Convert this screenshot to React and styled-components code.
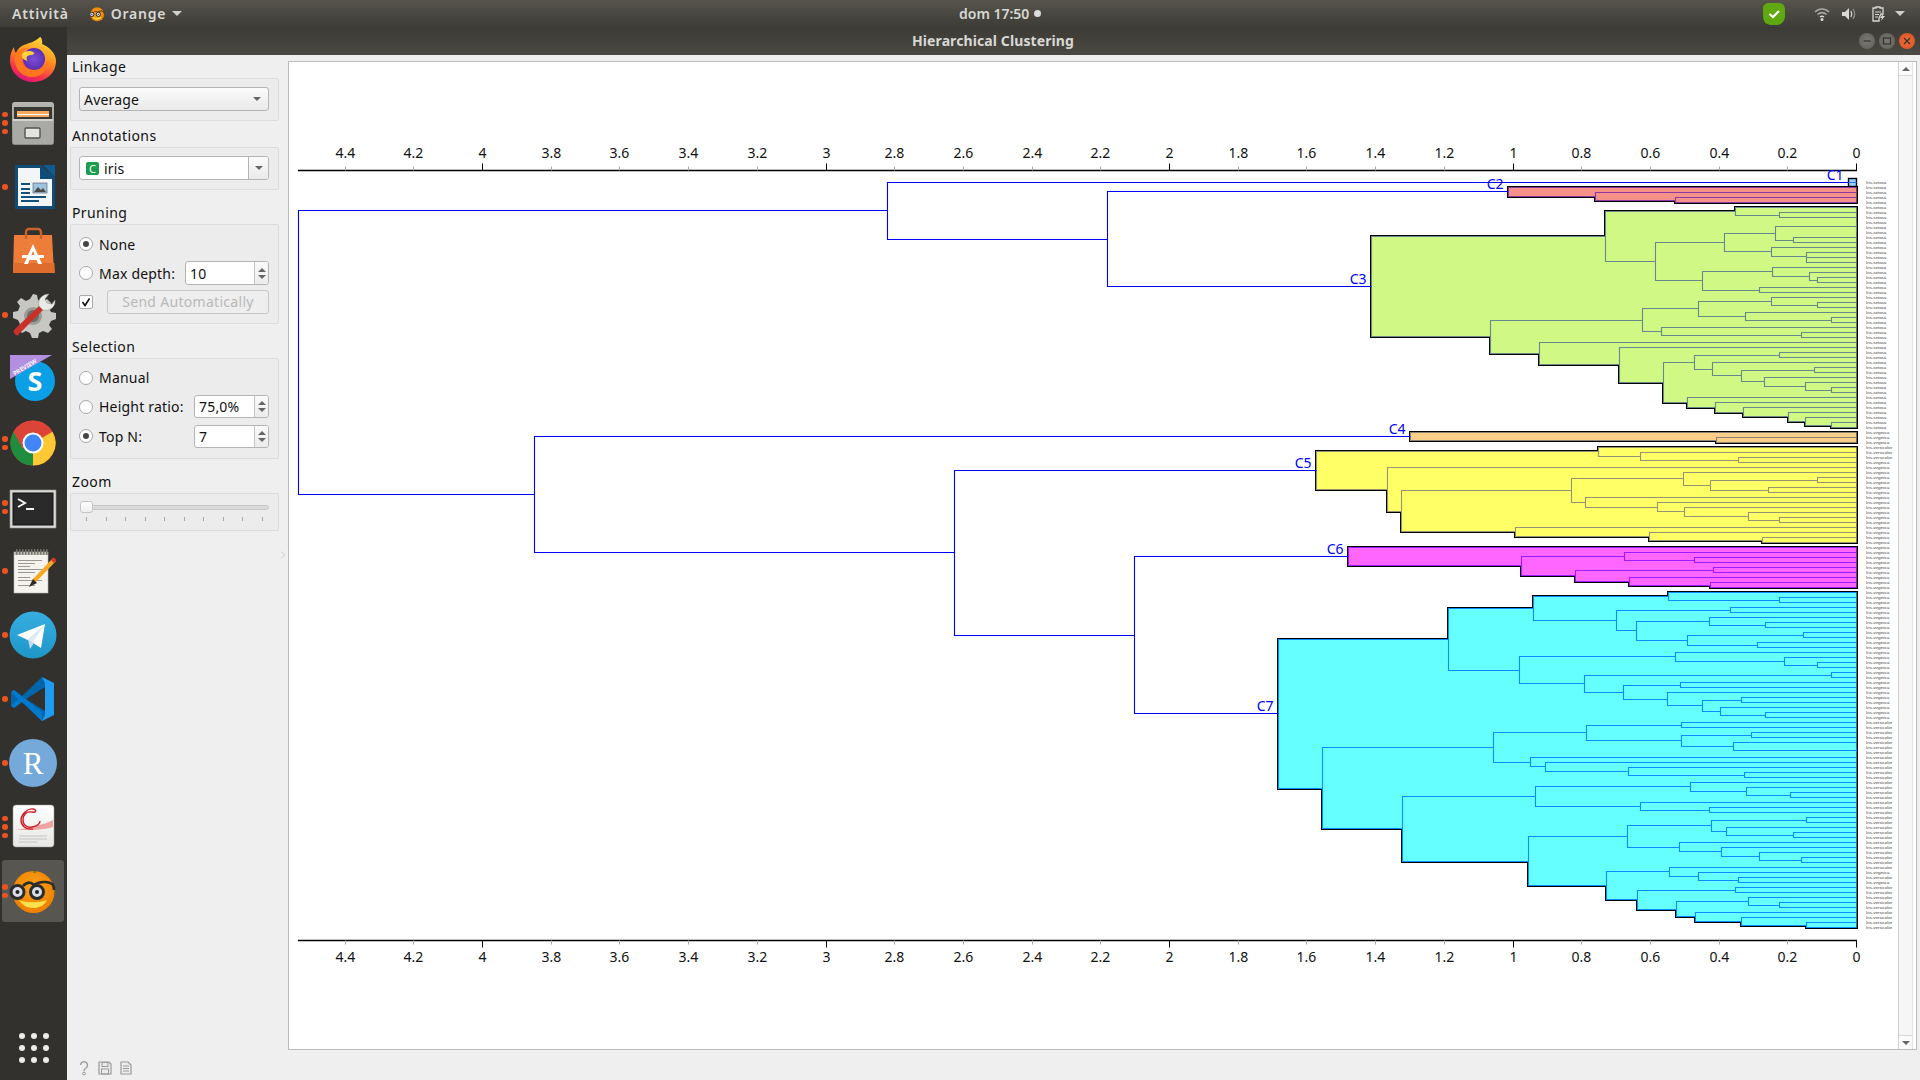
import React from "react";
import styled, { createGlobalStyle } from "styled-components";

const Global = createGlobalStyle`
  html, body { margin: 0; padding: 0; width: 1920px; height: 1080px; overflow: hidden; background: #efefef; }
  * { box-sizing: border-box; }
  body { font-family: "Noto Sans", "Open Sans", sans-serif; color: #111; }
`;

const Page = styled.div`width:1920px;height:1080px;display:flex;flex-direction:column;overflow:hidden;`;
const TopBar = styled.header`
  height:27px;flex:none;display:flex;align-items:center;position:relative;
  background:linear-gradient(#57544d,#3d3c37);
  color:#d8d8d4;font-size:14px;font-weight:600;
`;
const TopLeft = styled.div`display:flex;align-items:center;flex:1;padding-left:12px;letter-spacing:.8px;`;
const AppMenu = styled.div`display:flex;align-items:center;gap:6px;margin-left:20px;`;
const Caret = styled.span`
  width:0;height:0;border-left:5px solid transparent;border-right:5px solid transparent;border-top:5px solid #d0d0cc;
  margin-left:${p=>p.$ml||0}px;
`;
const Clock = styled.div`display:flex;align-items:center;gap:5px;position:absolute;left:959px;top:0;height:27px;`;
const ClockDot = styled.span`width:7px;height:7px;border-radius:50%;background:#dcdcd8;`;
const Tray = styled.div`display:flex;align-items:center;padding-right:15px;`;
const TrayIcon = styled.span`display:flex;width:${p=>p.$w}px;justify-content:center;margin-left:${p=>p.$ml||0}px;`;

const Body = styled.div`flex:1;display:flex;min-height:0;`;
const Dock = styled.nav`width:67px;flex:none;background:#33312d;display:flex;flex-direction:column;align-items:center;padding-bottom:17px;`;
const DockItem = styled.div`
  width:62px;height:${p=>p.$active?"62px":"64px"};flex:none;position:relative;display:flex;align-items:center;justify-content:center;
  border-radius:3px;background:${p=>p.$active?"#575650":"transparent"};margin:${p=>p.$active?"1px 3px 1px 2px":"0 3px 0 2px"};
`;
const Dots = styled.div`position:absolute;left:0;top:0;bottom:0;display:flex;flex-direction:column;justify-content:center;gap:3px;`;
const Dot = styled.span`width:5.5px;height:5.5px;border-radius:50%;background:#e95420;`;
const AppsGrid = styled.div`margin-top:auto;display:grid;grid-template-columns:repeat(3,6px);gap:6px;`;
const AppsDot = styled.span`width:6px;height:6px;border-radius:50%;background:#ececea;`;

const Win = styled.div`flex:1;display:flex;flex-direction:column;min-width:0;`;
const TitleBar = styled.div`
  height:28px;flex:none;display:flex;align-items:center;position:relative;justify-content:flex-end;padding-right:5px;gap:4px;
  background:linear-gradient(#3c3b36,#4b4943);
`;
const Title = styled.div`position:absolute;left:845px;top:0;line-height:27px;color:#d8d8d4;font-size:14px;font-weight:700;letter-spacing:.1px;`;
const WinBtn = styled.span`
  width:16px;height:16px;border-radius:50%;display:flex;align-items:center;justify-content:center;
  background:${p=>p.$close?"radial-gradient(#ef6f3c,#d9501f)":"radial-gradient(#7c7a74,#5f5d57)"};
`;
const Content = styled.div`flex:1;display:flex;min-height:0;background:#efefef;`;
const Panel = styled.aside`width:221px;flex:none;display:flex;`;
const PanelCol = styled.div`width:209px;margin-left:3px;flex:none;display:flex;flex-direction:column;padding-top:2px;letter-spacing:.2px;`;
const Gutter = styled.div`flex:1;display:flex;align-items:center;justify-content:center;padding:0 3px 25px 0;`;
const GroupTitle = styled.div`height:20px;line-height:20px;font-size:14px;padding-left:2px;margin-top:${p=>p.$top}px;margin-bottom:1px;letter-spacing:.4px;`;
const GroupBox = styled.div`
  background:#ececec;border:1px solid #dcdcdc;border-radius:2px;padding:${p=>p.$pad};
  display:flex;flex-direction:column;gap:${p=>p.$gap||0}px;
`;
const Combo = styled.div`
  height:24px;border:1px solid #b4b4b4;border-radius:3px;background:linear-gradient(#fbfbfb,#e9e9e9);
  display:flex;align-items:center;font-size:14px;padding-left:4px;position:relative;
`;
const ComboText = styled.span`flex:1;display:flex;align-items:center;gap:5px;`;
const ComboEdit = styled(Combo)`background:#fff;padding-left:6px;`;
const ComboBtn = styled.span`
  width:${p=>p.$w}px;align-self:stretch;display:flex;align-items:center;justify-content:center;flex:none;
  background:${p=>p.$line?"linear-gradient(#fbfbfb,#e9e9e9)":"transparent"};
  border-left:${p=>p.$line?"1px solid #b4b4b4":"none"};border-radius:0 2px 2px 0;
`;
const Arrow = styled.span`width:0;height:0;border-left:4px solid transparent;border-right:4px solid transparent;border-top:4px solid #666;`;
const ArrowUp = styled.span`width:0;height:0;border-left:4px solid transparent;border-right:4px solid transparent;border-bottom:4px solid #666;`;
const Badge = styled.span`
  width:13px;height:13px;background:#1c9c4f;border-radius:2px;color:#fff;font-size:11px;line-height:13px;text-align:center;
`;
const Row = styled.div`height:${p=>p.$h||24}px;display:flex;align-items:center;font-size:14px;`;
const Radio = styled.span`
  width:14px;height:14px;border-radius:50%;border:1px solid #a8a8a8;background:#fff;flex:none;display:flex;align-items:center;justify-content:center;margin-right:6px;
  &::after{content:"";width:6px;height:6px;border-radius:50%;background:${p=>p.$on?"#444":"transparent"};}
`;
const Spin = styled.div`
  width:${p=>p.$w}px;height:${p=>p.$h||24}px;margin-left:auto;border:1px solid #b4b4b4;border-radius:3px;background:#fff;display:flex;align-items:center;padding-left:4px;font-size:14px;
`;
const SpinVal = styled.span`flex:1;`;
const SpinBtns = styled.span`
  width:14px;align-self:stretch;border-left:1px solid #c4c4c4;background:linear-gradient(#fafafa,#ececec);display:flex;flex-direction:column;align-items:center;justify-content:center;gap:3px;border-radius:0 2px 2px 0;
`;
const Check = styled.span`width:14px;height:14px;border:1px solid #a8a8a8;background:#fff;border-radius:2px;display:flex;flex:none;align-items:center;justify-content:center;`;
const SendBtn = styled.div`
  margin-left:14px;flex:1;height:24px;border:1px solid #c8c8c8;border-radius:3px;background:#eeeeee;color:#b9b9b9;font-size:14px;text-align:center;line-height:22px;letter-spacing:.3px;
`;
const SliderWrap = styled.div`height:36px;position:relative;`;
const Groove = styled.div`position:absolute;left:1px;right:0;top:11px;height:5px;border:1px solid #c6c6c6;border-radius:3px;background:#dadada;`;
const Handle = styled.div`position:absolute;left:1px;top:7px;width:13px;height:12px;border:1px solid #c4c4c4;border-radius:3px;background:linear-gradient(#fff,#efefef);`;
const Ticks = styled.div`position:absolute;left:7px;right:6px;top:23px;height:4px;display:flex;justify-content:space-between;`;
const Tick = styled.span`width:1px;height:4px;background:#aaa;`;
const Status = styled.div`margin-top:auto;height:31px;display:flex;align-items:center;gap:5px;padding-left:6px;padding-top:7px;`;

const Main = styled.main`flex:1;min-width:0;display:flex;padding:6px 3px 30px 0;`;
const Frame = styled.div`flex:1;display:flex;background:#fff;border:1px solid #bcbcbc;min-width:0;`;
const Plot = styled.svg`width:1609px;flex:none;display:block;`;
const ScrollBar = styled.div`width:15px;flex:none;border-left:1px solid #d0d0d0;border-right:1px solid #e2e2e2;background:#f6f6f6;display:flex;flex-direction:column;justify-content:space-between;`;
const ScrollBtn = styled.div`height:14px;display:flex;align-items:center;justify-content:center;background:#fbfbfb;border-${p=>p.$down?"top":"bottom"}:1px solid #d8d8d8;`;

/* ------- dendrogram data ------- */
const L = 0;
const c2=[1508,L,[1595,L,[1675,L,L]]];
const c3=[1371,
 [1605,
  [1735,L,[1779,L,L]],
  [1655,
   [1724,
    [1775,[1856.5,L,[1856.5,L,L]],[1793,L,L]],
    [1771,L,[1806,L,[1806.5,L,L]]]],
   [1702,
    [1772,L,[1809,L,[1817,L,L]]],
    [1759,L,L]]]],
 [1490,
  [1642,
   [1698,
    [1771,L,[1817,L,L]],
    [1745,L,[1831,L,L]]],
   [1661,L,[1801,L,L]]],
  [1539,L,
   [1619,L,
    [1663,
     [1694,
      [1779,L,L],
      [1712,L,[1741,[1814,L,L],[1764,L,[1805,L,[1831,L,L]]]]]],
     [1687,L,[1715,L,[1743,L,[1788,L,[1805,L,[1831,L,L]]]]]]]]]]];
const c4=[1410.5,L,[1716,L,L]];
const c5=[1316.5,
 [1598.5,L,[1640,L,[1738,L,L]]],
 [1387,L,
  [1401.5,
   [1571.6,
    [1683.5,L,[1710.4,[1817.5,L,L],[1768.5,L,L]]],
    [1585.4,L,[1657.4,L,[1684.7,L,[1748.3,L,[1779.6,L,L]]]]]],
   [1515,L,[1649.9,L,[1762.6,L,L]]]]]];
const c6=[1348.6,L,[1521.4,[1624.6,L,[1694.6,L,L]],[1575.5,[1713.5,L,L],[1629.7,L,[1710.4,L,L]]]]];
const c7=[1278.6,
 [1448.6,
  [1533.2,
   [1668.5,L,[1779.6,L,L]],
   [1616.3,
    [1730.6,L,L],
    [1636.4,
     [1709.6,L,[1765.3,L,L]],
     [1687.4,[1803.3,L,L],[1757.4,L,L]]]]],
  [1519.4,
   [1675.6,L,[1784.3,L,[1817.5,L,L]]],
   [1584.2,
    [1831.4,L,L],
    [1623.4,
     [1680.3,L,L],
     [1667.3,L,[1702.5,[1741.2,L,L],[1720.3,L,[1765.3,L,L]]]]]]]],
 [1322.5,
  [1493.3,
   [1586.2,
    [1681.5,L,L],
    [1681.5,[1751.5,L,L],[1733.3,L,[1856.5,L,L]]]],
   [1530.5,L,[1545.5,L,[1628.5,L,[1744.4,L,L]]]]],
  [1402.3,
   [1535.3,
    [1690.5,L,[1746.5,L,[1790.3,L,L]]],
    [1640.5,L,[1709.9,L,L]]],
   [1528.5,
    [1627.4,
     [1711.2,[1806.3,L,L],[1726.3,L,[1793.3,L,L]]],
     [1679.2,L,[1721.3,L,[1759.6,L,[1801.2,L,L]]]]],
    [1606.4,
     [1669.1,L,[1698.6,L,[1738.5,L,L]]],
     [1637.5,
      [1735.2,L,L],
      [1676.2,
       [1748.6,L,[1779.4,L,L]],
       [1695.2,L,[1741,L,[1806.3,L,L]]]]]]]]]];

const RIGHT = 1856.5;
const snap = v => Math.floor(v) + 0.5;
let row = 0;
function lay(n){
  if(n===L){ const y=182.5+5*row; row+=1; return {x:RIGHT,y,leaf:true}; }
  const a=lay(n[1]), b=lay(n[2]);
  return {x:snap(n[0]),a,b,y:(a.y+b.y)/2};
}
const CLUSTERS=[
  {label:"C1",single:true,fill:"#8fd2ff",line:"#3a6fe0"},
  {label:"C2",data:c2,fill:"#f6918a",line:"#8a3aa0"},
  {label:"C3",data:c3,fill:"#cff884",line:"#67888c"},
  {label:"C4",data:c4,fill:"#fccf88",line:"#8c8478"},
  {label:"C5",data:c5,fill:"#ffff66",line:"#959575"},
  {label:"C6",data:c6,fill:"#ff66ff",line:"#9a1cff"},
  {label:"C7",data:c7,fill:"#66ffff",line:"#0c8cff"},
].map(c=>{
  if(c.single){ const y=182.5+5*row; row+=1; return {...c,node:{x:1848.5,y,leaf:true,cluster:true}}; }
  const node=lay(c.data); node.cluster=true; return {...c,node};
});
const join=(x,a,b)=>({x:snap(x),a,b,y:(a.y+b.y)/2});
const [K1,K2,K3,K4,K5,K6,K7]=CLUSTERS.map(c=>c.node);
const ROOT=join(298,join(887,K1,join(1107,K2,K3)),join(534,K4,join(954,K5,join(1134,K6,K7))));

const elbow=n=>`M${n.a.x} ${snap(n.a.y)}H${n.x}V${snap(n.b.y)}H${n.b.x}`;
function innerPath(n){ return n.leaf?"":elbow(n)+innerPath(n.a)+innerPath(n.b); }
function bluePath(n){ return n.cluster?"":elbow(n)+bluePath(n.a)+bluePath(n.b); }
function outline(root){
  const edge=k=>{const out=[];let n=root;while(!n.leaf){const c=n[k];out.push([n.x,snap(c.y)],[c.x,snap(c.y)]);n=c;}return out;};
  const pts=[...edge("a"),...edge("b").reverse()];
  return "M"+pts.map(p=>p.join(" ")).join("L")+"Z";
}
const species=i=>{
  if(i<50) return "Iris-setosa";
  if(i>=53&&i<=55) return "Iris-versicolor";
  if(i<82) return "Iris-virginica";
  const r=i-82;
  if(r<26) return "Iris-virginica";
  if(r===56||r===58) return "Iris-virginica";
  return "Iris-versicolor";
};
const TICKS=Array.from({length:23},(_,i)=>i*0.2).map(v=>+v.toFixed(1));
const tx=v=>snap(RIGHT-v*343.5);

const AxisLabel = styled.text`font-family:"Noto Sans",sans-serif;font-size:14px;fill:#111;text-anchor:middle;`;
const ClusterLabel = styled.text`font-family:"Noto Sans",sans-serif;font-size:14px;fill:#0000ff;text-anchor:end;`;
const LeafLabel = styled.text`font-family:"Liberation Sans",sans-serif;font-size:4.4px;fill:#444;`;

function Axis({y,dir,labelY}){
  return <g>
    <path d={`M298 ${y}H${RIGHT+.5}`} stroke="#000" strokeWidth="1.3"/>
    {TICKS.filter(v=>v<=4.4).map(v=>{
      const major=Number.isInteger(v);
      return <g key={v}>
        <path d={`M${tx(v)} ${y}V${y+dir*(major?7:4)}`} stroke={major?"#000":"#aaa"} strokeWidth="1"/>
        <AxisLabel x={tx(v)} y={labelY}>{String(v)}</AxisLabel>
      </g>;
    })}
  </g>;
}

function Dendrogram(){
  return <Plot viewBox="289 62 1609 987" preserveAspectRatio="xMinYMin meet">
    <Axis y={170.5} dir={-1} labelY={158}/>
    <Axis y={940.5} dir={1} labelY={962}/>
    {CLUSTERS.map(c=>{
      if(c.single) return <g key={c.label}>
        <rect x="1848.5" y="178.5" width="8" height="8" fill={c.fill} stroke="#000" strokeWidth="1.4"/>
        <path d="M1848 182.5H1856.5" stroke={c.line} strokeWidth="1"/>
      </g>;
      const d=outline(c.node);
      return <g key={c.label}>
        <path d={d} fill="#000" stroke="#000" strokeWidth="3" strokeLinejoin="miter"/>
        <path d={d} fill={c.fill}/>
        <path d={innerPath(c.node)} fill="none" stroke={c.line} strokeWidth="1.1"/>
      </g>;
    })}
    <path d={bluePath(ROOT)} fill="none" stroke="#0000ff" strokeWidth="1.1"/>
    {CLUSTERS.map(c=>{
      const n=c.node;
      return <ClusterLabel key={c.label} x={n.x-5} y={snap(n.y)-3}>{c.label}</ClusterLabel>;
    })}
    {Array.from({length:150},(_,i)=><LeafLabel key={i} x="1866" y={184+5*i}>{species(i)}</LeafLabel>)}
  </Plot>;
}

/* ------- dock icons ------- */
const IconBox = styled.svg`display:block;flex:none;`;
const Ico = ({children,s=48,vb="0 0 48 48"})=><IconBox width={s} height={s} viewBox={vb}>{children}</IconBox>;
const Firefox=()=><Ico>
  <defs><linearGradient id="ff1" x1="0.7" y1="0" x2="0.3" y2="1"><stop offset="0" stopColor="#ffe03a"/><stop offset=".45" stopColor="#ff8a1e"/><stop offset=".8" stopColor="#f5304e"/><stop offset="1" stopColor="#d9117f"/></linearGradient>
  <radialGradient id="ff2"><stop offset="0" stopColor="#7f4fd8"/><stop offset="1" stopColor="#5a2fb0"/></radialGradient></defs>
  <path d="M24 47C11 47 1 37 1 25 1 19 3 15 5 12c0 3 1 5 2 6 2-5 6-8 11-9-1 0 8-2 13-7 1-1 3 5 2 7 7 3 14 9 14 17 0 12-10 21-23 21Z" fill="url(#ff1)"/>
  <circle cx="25" cy="24" r="11" fill="url(#ff2)"/>
  <path d="M6 20c3-5 9-8 15-7-5 1-9 5-9 10 0 7 6 12 13 12 8 0 13-5 14-10 1 9-6 17-16 17C12 42 4 32 6 20Z" fill="#ff7a1c" opacity=".95"/>
  <path d="M13 19c3-3 8-4 11-2 3 1 0 3-2 3-4 0-6 3-3 6-4-1-7-3-6-7Z" fill="#ffd23c"/>
</Ico>;
const Files=()=><Ico>
  <defs><linearGradient id="fi1" x1="0" y1="0" x2="0" y2="1"><stop offset="0" stopColor="#b7b7b3"/><stop offset="1" stopColor="#8b8b87"/></linearGradient></defs>
  <rect x="3" y="3" width="42" height="43" rx="3" fill="url(#fi1)"/>
  <rect x="5" y="8" width="38" height="16" fill="#3a3835"/>
  <rect x="8" y="12" width="32" height="6" fill="#f2a95e"/><rect x="8" y="15" width="32" height="1" fill="#fff"/>
  <rect x="4" y="21" width="40" height="24" fill="#a9a9a5"/><rect x="4" y="20" width="40" height="2" fill="#d2d2ce"/>
  <rect x="16" y="29" width="15" height="10" rx="1" fill="#e3e3e0" stroke="#55534f" strokeWidth="1.4"/>
</Ico>;
const Writer=()=><Ico>
  <path d="M6 2h26l14 12v32H6Z" fill="#0f4d78"/><path d="M9 5h22v11h12v27H9Z" fill="#f3f5f6"/>
  <path d="M34 2h12v12Z" fill="#0f5c93"/>
  <rect x="12" y="20" width="9" height="2" fill="#14507c"/><rect x="12" y="25" width="9" height="2" fill="#14507c"/><rect x="12" y="29" width="9" height="2" fill="#14507c"/>
  <rect x="12" y="33" width="25" height="2" fill="#14507c"/><rect x="12" y="37" width="18" height="2" fill="#14507c"/>
  <rect x="24" y="20" width="14" height="10" fill="#9cc4e0" stroke="#556" strokeWidth=".6"/><path d="M25 29l4-5 3 3 2-2 3 4Z" fill="#4a4a44"/>
</Ico>;
const Store=()=><Ico>
  <path d="M5 8h38l2 38H4Z" fill="#ef7d3a"/><path d="M4.600 36h40.800l.6 10H4Z" fill="#df6c2c"/>
  <path d="M17 12V5a3 3 0 0 1 3-3h9a3 3 0 0 1 3 3v7" fill="none" stroke="#c9622a" strokeWidth="2.400"/>
  <path d="M24 17l9 20h-4l-1.500-4h-7L19 37h-4ZM24 24l-2 5h4Z" fill="#fff"/><rect x="13" y="28" width="22" height="3" rx="1" fill="#fff"/>
</Ico>;
const Settings=()=><Ico>
  <path d="M24 3l4 1 1 5 5 2 4-3 4 4-2 5 2 4 5 1v6l-5 2-2 4 3 4-4 4-5-2-4 2-1 5h-6l-2-5-4-2-4 2-4-4 2-5-2-4-5-2v-6l5-1 2-5-3-4 4-4 5 3 4-2Z" fill="#c6c6c2"/>
  <circle cx="24" cy="25" r="9" fill="#9a9a96"/><circle cx="24" cy="25" r="6" fill="#6c6c67"/>
  <path d="M6 43c-2-2-2-3 0-5L30 15l4 4L10 43c-1 2-2 2-4 0Z" fill="#c8302b"/>
  <path d="M30 15c-2-6 3-12 10-12l-4 5 2 4 5 1 3-4c1 7-6 12-12 10Z" fill="#e9e9e6" stroke="#888" strokeWidth=".5"/>
</Ico>;
const SkypeLabel=styled.text`font-family:"Noto Sans",sans-serif;font-weight:700;fill:#fff;text-anchor:middle;`;
const Skype=()=><Ico>
  <circle cx="26" cy="26" r="20" fill="#0b9fe6"/>
  <path d="M1 0h42L1 24Z" fill="#b28fe0"/>
  <SkypeLabel x="17" y="14" fontSize="6" transform="rotate(-31 17 14)" opacity=".9">PREVIEW</SkypeLabel>
  <SkypeLabel x="26" y="36" fontSize="27">S</SkypeLabel>
</Ico>;
const Chrome=()=><Ico>
  <circle cx="24" cy="24" r="22.500" fill="#db4437"/>
  <path d="M24 24L43.500 12.700A22.500 22.500 0 0 1 24 46.500Z" fill="#fcc934"/>
  <path d="M24 24L24 46.500A22.500 22.500 0 0 1 4.500 12.700Z" fill="#1e8e3e"/>
  <path d="M4.500 12.700A22.500 22.500 0 0 1 43.500 12.700L24 12.700 14 30Z" fill="#db4437"/>
  <circle cx="24" cy="24" r="10.500" fill="#fff"/><circle cx="24" cy="24" r="8.500" fill="#4285f4"/>
</Ico>;
const Terminal=()=><Ico>
  <rect x="1" y="7" width="46" height="38" fill="#d8d8d6" stroke="#999" strokeWidth=".6"/>
  <rect x="4" y="10" width="40" height="32" fill="#2a2a2a" stroke="#111"/>
  <path d="M9 16l7 4-7 4" fill="none" stroke="#f2f2f2" strokeWidth="2"/><rect x="17" y="25" width="8" height="2" fill="#f2f2f2"/>
</Ico>;
const Gedit=()=><Ico>
  <rect x="5" y="5" width="34" height="41" fill="#f4f3ee" stroke="#bbb" strokeWidth=".6"/>
  <rect x="5" y="5" width="34" height="3" fill="#bdbdb6"/>
  {[0,1,2,3,4,5,6,7,8,9,10].map(i=><rect key={i} x={7+i*3} y="2" width="1.500" height="6" rx=".7" fill="#77756d"/>)}
  {[13,16,19,22,25,30,33,38].map((y,i)=><rect key={y} x="9" y={y} width={i%3===0?24:i%3===1?17:12} height="1" fill="#99978f"/>)}
  <path d="M20 40l4-8 20-21 3 3-20 21Z" fill="#f6a823"/><path d="M42 13l2-2c1-1 4 2 3 3l-2 2Z" fill="#d7352b"/><path d="M20 40l4-8 4 4Z" fill="#2a2a2a"/>
</Ico>;
const Telegram=()=><Ico>
  <defs><linearGradient id="tg" x1="0" y1="0" x2="0" y2="1"><stop offset="0" stopColor="#37aee2"/><stop offset="1" stopColor="#1e96c8"/></linearGradient></defs>
  <circle cx="24" cy="24" r="23.500" fill="url(#tg)"/>
  <path d="M8 24L36 13 32 37 21 30Z" fill="#fff"/><path d="M19 28l2 10 4-6-6-4Z" fill="#c8daea"/><path d="M19 28L36 13 24 31Z" fill="#dcebf5"/>
</Ico>;
const VSCode=()=><Ico>
  <path d="M33 2L13 21 5 15 2 17v14l3 2 8-6 20 19 3-2V36L17 24 36 12V4Z" fill="#0065a9"/>
  <path d="M2 17l3-2 28 22v9L13 27l-8 6-3-2 7-7Z" fill="#007acc"/><path d="M33 46l12-6V8L33 2l3 6v32Z" fill="#1f9cf0"/>
</Ico>;
const RLabel=styled.text`font-family:"Liberation Serif",serif;font-size:31px;fill:#fff;text-anchor:middle;`;
const RApp=()=><Ico><circle cx="24" cy="24" r="24" fill="#74a9da"/><RLabel x="24" y="35">R</RLabel></Ico>;
const Pdf=()=><Ico>
  <defs><linearGradient id="pd" x1="0" y1="0" x2="0" y2="1"><stop offset="0" stopColor="#ffffff"/><stop offset="1" stopColor="#e6e6e4"/></linearGradient></defs>
  <rect x="4" y="2" width="41" height="42" rx="3" fill="url(#pd)" stroke="#999" strokeWidth=".5"/>
  <path d="M7 27c12-2 28-5 37-10v7c-8 3-24 3-37 3Z" fill="#f0a3a3"/>
  <path d="M24 26c-8 1-12-4-12-9s6-12 12-11c5 1 2 4-1 3-6-1-9 3-9 8s4 8 9 7c6-1 8-4 8-6" fill="none" stroke="#cf1f2a" strokeWidth="1.400"/>
  <path d="M10 33h28M10 36h28M10 39h18" stroke="#c4c4c2" strokeWidth="1"/>
</Ico>;
const OrangeApp=({s=48})=><Ico s={s}>
  <defs><radialGradient id={`or${s}`} cx=".5" cy=".4"><stop offset="0" stopColor="#ffa51e"/><stop offset="1" stopColor="#f08300"/></radialGradient></defs>
  <circle cx="24.500" cy="25" r="21" fill={`url(#or${s})`}/>
  <path d="M10 33c7 3 21 3 28 0-3 6-8 8-14 8-6 0-11-3-14-8Z" fill="#ffe14d"/>
  <path d="M24 5h3" stroke="#3a7a18" strokeWidth="1.200"/>
  <path d="M14 19c4-4 8-4 11-1 4-3 15-5 19 0 1 2 1 3 1 5" fill="none" stroke="#2c2c2c" strokeWidth="2.600"/>
  <circle cx="8.500" cy="25" r="6.500" fill="#d8dde8" stroke="#2c2c2c" strokeWidth="3"/><circle cx="28" cy="25" r="6.500" fill="#d8dde8" stroke="#2c2c2c" strokeWidth="3"/>
  <circle cx="8.500" cy="25" r="2" fill="#222"/><circle cx="28" cy="25" r="2" fill="#222"/>
</Ico>;

const DOCK=[
  [Firefox,0],[Files,3],[Writer,1],[Store,0],[Settings,1],[Skype,0],[Chrome,2],[Terminal,2],[Gedit,1],[Telegram,1],[VSCode,1],[RApp,1],[Pdf,3],[OrangeApp,2,true],
];

const Help=()=><Ico s={16} vb="0 0 16 16"><path d="M4.500 5a3.500 3.500 0 1 1 5.500 3c-1.300.8-2 1.400-2 3" fill="none" stroke="#999" strokeWidth="1.400"/><circle cx="8" cy="13.500" r="1.400" fill="none" stroke="#999"/></Ico>;
const Save=()=><Ico s={16} vb="0 0 16 16"><path d="M2 2h10l2 2v10H2Z" fill="#ececec" stroke="#999" strokeWidth="1.200"/><rect x="5" y="2.500" width="6" height="4" fill="none" stroke="#999"/><rect x="4.500" y="9" width="7" height="5" fill="none" stroke="#999"/></Ico>;
const Report=()=><Ico s={16} vb="0 0 16 16"><path d="M3 2h7l3 3v9H3Z" fill="#ececec" stroke="#999" strokeWidth="1.200"/><path d="M5 6h6M5 8.500h6M5 11h6" stroke="#999"/></Ico>;

const Wifi=()=><Ico s={16} vb="0 0 16 16"><path d="M1 6c4-4 10-4 14 0M3.500 8.500c3-2.500 6-2.500 9 0" fill="none" stroke="#aaa9a4" strokeWidth="1.500"/><path d="M6 11c1.300-1 2.700-1 4 0" fill="none" stroke="#d8d8d4" strokeWidth="1.500"/><circle cx="8" cy="13.500" r="1.500" fill="#d8d8d4"/></Ico>;
const Speaker=()=><Ico s={16} vb="0 0 16 16"><path d="M1 6h3l4-4v12l-4-4H1Z" fill="#d8d8d4"/><path d="M10 5c1 2 1 4 0 6" fill="none" stroke="#d8d8d4" strokeWidth="1.300"/><path d="M12 3c2 3 2 7 0 10" fill="none" stroke="#908f8a" strokeWidth="1.300"/></Ico>;
const Clip=()=><Ico s={16} vb="0 0 16 16"><path d="M2 2h3V1h4v1h3v6l-2 0-2 4v3H2Z" fill="none" stroke="#d8d8d4" strokeWidth="1.300"/><path d="M4 6h6M4 8.500h4M4 11h3" stroke="#d8d8d4"/><path d="M12 8l-3 4h2l-1 3 4-5h-2Z" fill="#d8d8d4"/></Ico>;
const Shield=()=><Ico s={22} vb="0 0 22 22"><path d="M6 0h10c4 0 6 3 6 7v6c0 5-4 9-8 9H8c-5 0-8-4-8-9V5c0-3 3-5 6-5Z" fill="#5fa80f"/><path d="M6.500 11l3.500 3 6-6" fill="none" stroke="#fff" strokeWidth="2.200"/></Ico>;

function Group({title,top,children,pad,gap}){
  return <>
    <GroupTitle $top={top}>{title}</GroupTitle>
    <GroupBox $pad={pad} $gap={gap}>{children}</GroupBox>
  </>;
}
const SpinBox=({w,h,v})=><Spin $w={w} $h={h}><SpinVal>{v}</SpinVal><SpinBtns><ArrowUp/><Arrow/></SpinBtns></Spin>;

export default function App(){
  return <Page>
    <Global/>
    <TopBar>
      <TopLeft>
        <span>Attività</span>
        <AppMenu><OrangeApp s={16}/><span>Orange</span><Caret $ml={0}/></AppMenu>
      </TopLeft>
      <Clock><span>dom 17:50</span><ClockDot/></Clock>
      <Tray>
        <TrayIcon $w={22}><Shield/></TrayIcon>
        <TrayIcon $w={16} $ml={29}><Wifi/></TrayIcon>
        <TrayIcon $w={16} $ml={11}><Speaker/></TrayIcon>
        <TrayIcon $w={16} $ml={14}><Clip/></TrayIcon>
        <Caret $ml={8}/>
      </Tray>
    </TopBar>
    <Body>
      <Dock>
        {DOCK.map(([C,n,active],i)=><DockItem key={i} $active={active}>
          {n>0 && <Dots>{Array.from({length:n},(_,k)=><Dot key={k}/>)}</Dots>}
          <C/>
        </DockItem>)}
        <AppsGrid>{Array.from({length:9},(_,i)=><AppsDot key={i}/>)}</AppsGrid>
      </Dock>
      <Win>
        <TitleBar>
          <Title>Hierarchical Clustering</Title>
          <WinBtn><Ico s={10} vb="0 0 10 10"><path d="M1.500 5h7" stroke="#33322e" strokeWidth="1.200"/></Ico></WinBtn>
          <WinBtn><Ico s={10} vb="0 0 10 10"><rect x="1.500" y="2" width="7" height="6" fill="none" stroke="#33322e" strokeWidth="1.200"/></Ico></WinBtn>
          <WinBtn $close><Ico s={10} vb="0 0 10 10"><path d="M2 2l6 6M8 2l-6 6" stroke="#33322e" strokeWidth="1.200"/></Ico></WinBtn>
        </TitleBar>
        <Content>
          <Panel>
            <PanelCol>
              <Group title="Linkage" top={0} pad="8px 9px 9px 8px">
                <Combo><ComboText>Average</ComboText><ComboBtn $w={22}><Arrow/></ComboBtn></Combo>
              </Group>
              <Group title="Annotations" top={5} pad="8px 9px 9px 8px">
                <ComboEdit><ComboText><Badge>C</Badge>iris</ComboText><ComboBtn $w={20} $line><Arrow/></ComboBtn></ComboEdit>
              </Group>
              <Group title="Pruning" top={13} pad="7px 9px 9px 8px" gap={5}>
                <Row><Radio $on/>None</Row>
                <Row><Radio/>Max depth:<SpinBox w={84} v="10"/></Row>
                <Row><Check><Ico s={12} vb="0 0 12 12"><path d="M2.500 6l2.500 3.500 4.500-7" fill="none" stroke="#111" strokeWidth="1.600"/></Ico></Check><SendBtn>Send Automatically</SendBtn></Row>
              </Group>
              <Group title="Selection" top={13} pad="7px 9px 10px 8px" gap={5}>
                <Row $h={23}><Radio/>Manual</Row>
                <Row $h={25}><Radio/>Height ratio:<SpinBox w={75} h={23} v="75,0%"/></Row>
                <Row><Radio $on/>Top N:<SpinBox w={75} h={23} v="7"/></Row>
              </Group>
              <Group title="Zoom" top={13} pad="0 9px 0 8px">
                <SliderWrap>
                  <Groove/><Handle/>
                  <Ticks>{Array.from({length:10},(_,i)=><Tick key={i}/>)}</Ticks>
                </SliderWrap>
              </Group>
              <Status><Help/><Save/><Report/></Status>
            </PanelCol>
            <Gutter><Ico s={8} vb="0 0 8 12"><path d="M1.500 1l5 5-5 5" fill="none" stroke="#b8b8b8" strokeWidth="1"/></Ico></Gutter>
          </Panel>
          <Main>
            <Frame>
              <Dendrogram/>
              <ScrollBar>
                <ScrollBtn><ArrowUp/></ScrollBtn>
                <ScrollBtn $down><Arrow/></ScrollBtn>
              </ScrollBar>
            </Frame>
          </Main>
        </Content>
      </Win>
    </Body>
  </Page>;
}
